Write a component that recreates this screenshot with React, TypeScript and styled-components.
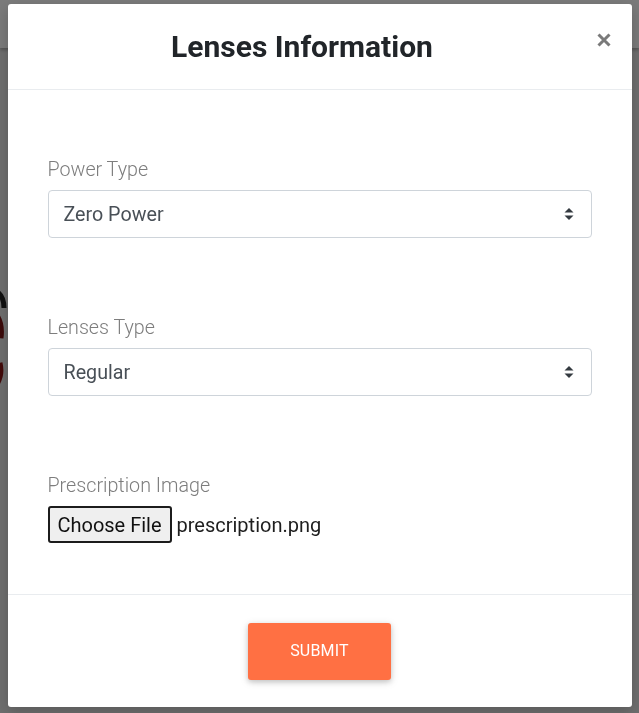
import React from "react";
import styled, { createGlobalStyle } from "styled-components";

const GlobalStyle = createGlobalStyle`
  html, body {
    margin: 0;
    padding: 0;
    height: 100%;
    overflow: hidden;
  }
  body {
    font-family: Roboto, "Liberation Sans", Arial, sans-serif;
    background: #e6e6e6;
  }
  * {
    box-sizing: border-box;
  }
`;

const Page = styled.div`
  display: flex;
  flex-direction: column;
  height: 713px;
`;

const PageHeader = styled.div`
  height: 48px;
  background: #ffffff;
  box-shadow: 0 2px 3px rgba(0, 0, 0, 0.25);
`;

const PageBody = styled.div`
  flex: 1;
  padding-top: 215px;
`;

const Backdrop = styled.div`
  position: fixed;
  inset: 0;
  background: rgba(0, 0, 0, 0.52);
  display: flex;
  justify-content: center;
  align-items: flex-start;
  padding-top: 4px;
`;

const Modal = styled.div`
  width: 624px;
  background: #ffffff;
  border-radius: 3px;
  display: flex;
  flex-direction: column;
  box-shadow: 0 5px 15px rgba(0, 0, 0, 0.2);
`;

const Header = styled.div`
  display: flex;
  align-items: flex-start;
  padding: 26px 21px 25px 16px;
  border-bottom: 1px solid #e9ecef;
`;

const Title = styled.h5`
  flex: 1;
  margin: 0;
  text-align: center;
  font-size: 30px;
  line-height: 34px;
  font-weight: 700;
  color: #212529;
`;

const Close = styled.button`
  width: 30px;
  margin-top: 3px;
  padding: 0;
  border: none;
  background: transparent;
  display: flex;
  justify-content: flex-end;
  cursor: pointer;
`;

const Body = styled.div`
  display: flex;
  flex-direction: column;
  gap: 75px;
  padding: 65px 40px 51px;
`;

const Group = styled.div`
  display: flex;
  flex-direction: column;
`;

const Label = styled.label`
  display: block;
  margin-bottom: 5px;
  font-size: 19.7px;
  line-height: 30px;
  font-weight: 300;
  color: #7d7d7d;
`;

const SelectBox = styled.div`
  height: 48px;
  border: 1px solid #ced4da;
  border-radius: 4px;
  padding: 0 17px 0 15px;
  display: flex;
  align-items: center;
  justify-content: space-between;
  font-size: 19.7px;
  color: #495057;
`;

const FileRow = styled.div`
  display: flex;
  align-items: center;
  gap: 5px;
`;

const FileButton = styled.button`
  height: 37px;
  width: 124px;
  padding: 0;
  border: 2px solid #1c1c1c;
  border-radius: 3px;
  background: #efefef;
  font-family: Roboto, "Liberation Sans", Arial, sans-serif;
  font-size: 20px;
  color: #111111;
`;

const FileName = styled.span`
  font-size: 20px;
  color: #1e1e1e;
`;

const Footer = styled.div`
  display: flex;
  justify-content: center;
  padding: 28px 0 27px;
  border-top: 1px solid #e9ecef;
`;

const Submit = styled.button`
  width: 143px;
  height: 57px;
  padding: 0 0 3px;
  border: none;
  border-radius: 3px;
  background: #ff7043;
  color: #ffffff;
  font-family: Roboto, "Liberation Sans", Arial, sans-serif;
  font-size: 16px;
  font-weight: 400;
  letter-spacing: 0.2px;
  text-transform: uppercase;
  box-shadow: 0 2px 5px rgba(0, 0, 0, 0.16), 0 2px 10px rgba(0, 0, 0, 0.12);
  cursor: pointer;
`;

const Arrows = () => (
  <svg width="10" height="12" viewBox="0 0 10 12">
    <path d="M5 0 L9.5 4.5 L0.5 4.5 Z" fill="#343a40" />
    <path d="M5 12 L9.5 7.5 L0.5 7.5 Z" fill="#343a40" />
  </svg>
);

const CloseIcon = () => (
  <svg width="14" height="14" viewBox="0 0 14 14">
    <path d="M1.5 1.5 L12.5 12.5 M12.5 1.5 L1.5 12.5" stroke="#7a7a7a" strokeWidth="3" />
  </svg>
);

const Glasses = () => (
  <svg width="8" height="150" viewBox="0 0 8 150">
    <path d="M-30 25 Q 4 20 4 45" stroke="#222" strokeWidth="5" fill="none" />
    <path d="M-30 40 Q 3 45 -1 75" stroke="#7a1212" strokeWidth="9" fill="none" />
    <path d="M-30 140 Q 5 125 -1 100" stroke="#8a1414" strokeWidth="7" fill="none" />
    <path d="M-30 155 Q 4 140 -4 118" stroke="#222" strokeWidth="4" fill="none" />
  </svg>
);

const Field: React.FC<{ label: string; value: string }> = ({ label, value }) => (
  <Group>
    <Label>{label}</Label>
    <SelectBox>
      <span>{value}</span>
      <Arrows />
    </SelectBox>
  </Group>
);

export default function App() {
  return (
    <>
      <GlobalStyle />
      <Page>
        <PageHeader />
        <PageBody>
          <Glasses />
        </PageBody>
      </Page>
      <Backdrop>
        <Modal>
          <Header>
            <Title>Lenses Information</Title>
            <Close aria-label="Close">
              <CloseIcon />
            </Close>
          </Header>
          <Body>
            <Field label="Power Type" value="Zero Power" />
            <Field label="Lenses Type" value="Regular" />
            <Group>
              <Label>Prescription Image</Label>
              <FileRow>
                <FileButton>Choose File</FileButton>
                <FileName>prescription.png</FileName>
              </FileRow>
            </Group>
          </Body>
          <Footer>
            <Submit>Submit</Submit>
          </Footer>
        </Modal>
      </Backdrop>
    </>
  );
}
